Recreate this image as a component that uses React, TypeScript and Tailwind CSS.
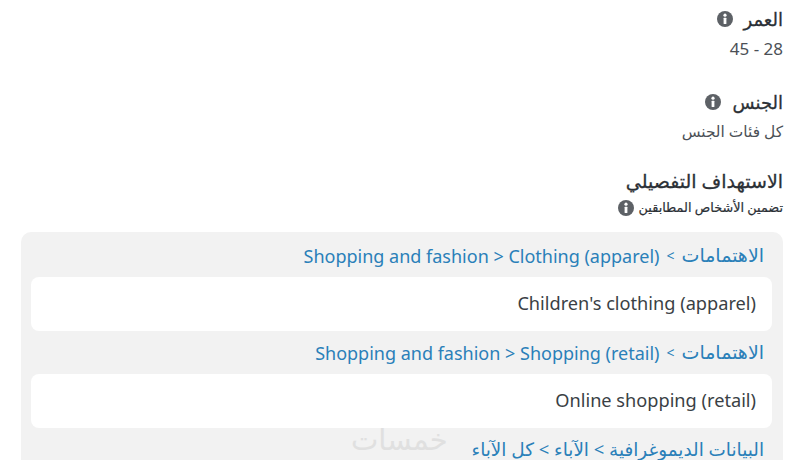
import type { ReactNode } from "react";

function InfoDot({ className }: { className: string }) {
  return (
    <svg viewBox="0 0 16 16" className={className} aria-hidden="true">
      <circle cx="8" cy="8" r="8" fill="#5d6166" />
      <circle cx="8" cy="4.2" r="1.6" fill="#fff" />
      <rect x="6.6" y="6.8" width="2.8" height="6.2" rx="0.5" fill="#fff" />
    </svg>
  );
}

function Crumb({ className, children }: { className: string; children: ReactNode }) {
  return (
    <div className={`flex items-center pr-[19px] leading-none text-[#2a80b9] ${className}`}>
      {children}
    </div>
  );
}

function Interests({ trail }: { trail: string }) {
  return (
    <>
      <span className="text-[19px]">الاهتمامات</span>
      <span className="mx-[7px] text-[14px]">&gt;</span>
      <span dir="ltr" className="text-[18px]">
        {trail}
      </span>
    </>
  );
}

function Item({ label }: { label: string }) {
  return (
    <div className="ml-[10px] mr-[11px] flex h-[54px] items-center rounded-[8px] bg-white px-[16px] text-[18.2px] text-[#3a3f45]">
      <span dir="ltr">{label}</span>
    </div>
  );
}

export default function App() {
  return (
    <div
      dir="rtl"
      className="relative h-[460px] w-[800px] overflow-hidden bg-white font-['Noto_Sans','DejaVu_Sans',sans-serif]"
    >
      <div className="px-[17px]">
        <div className="flex h-[39px] items-center gap-[10px] text-[18px] text-[#2b3036] [-webkit-text-stroke:0.3px_#2b3036]">
          العمر
          <InfoDot className="mb-[2px] h-[16px] w-[16px]" />
        </div>
        <div dir="ltr" className="text-right text-[17px] leading-[19px] text-[#4b5056]">
          45 - 28
        </div>

        <div className="mt-[24px] flex h-[41px] items-center gap-[12px] text-[18px] text-[#2b3036] [-webkit-text-stroke:0.3px_#2b3036]">
          الجنس
          <InfoDot className="mb-[2px] h-[16px] w-[16px]" />
        </div>
        <div className="text-[15.4px] leading-[18px] text-[#4b5056]">كل فئات الجنس</div>

        <div className="mt-[24px] text-[19px] leading-[32px] text-[#2b3036] [-webkit-text-stroke:0.3px_#2b3036]">
          الاستهداف التفصيلي
        </div>
        <div className="mt-[2px] flex h-[18px] items-center gap-[5px] text-[12.8px] text-[#2b3036] [-webkit-text-stroke:0.2px_#2b3036]">
          تضمين الأشخاص المطابقين
          <InfoDot className="h-[16px] w-[16px]" />
        </div>
      </div>

      <div className="ml-[21px] mr-[17px] mt-[15px] rounded-t-[10px] bg-[#f2f2f2]">
        <Crumb className="h-[45px] pt-[2px]">
          <Interests trail="Shopping and fashion > Clothing (apparel)" />
        </Crumb>
        <Item label="Children's clothing (apparel)" />
        <Crumb className="h-[43px]">
          <Interests trail="Shopping and fashion > Shopping (retail)" />
        </Crumb>
        <Item label="Online shopping (retail)" />
        <Crumb className="h-[42px] text-[18.4px]">
          <span>البيانات الديموغرافية &gt; الآباء &gt; كل الآباء</span>
        </Crumb>
      </div>

      {/* site watermark */}
      <div className="absolute left-[351px] top-[417px] text-[29px] text-[#e0e0e0]">خمسات</div>
    </div>
  );
}
